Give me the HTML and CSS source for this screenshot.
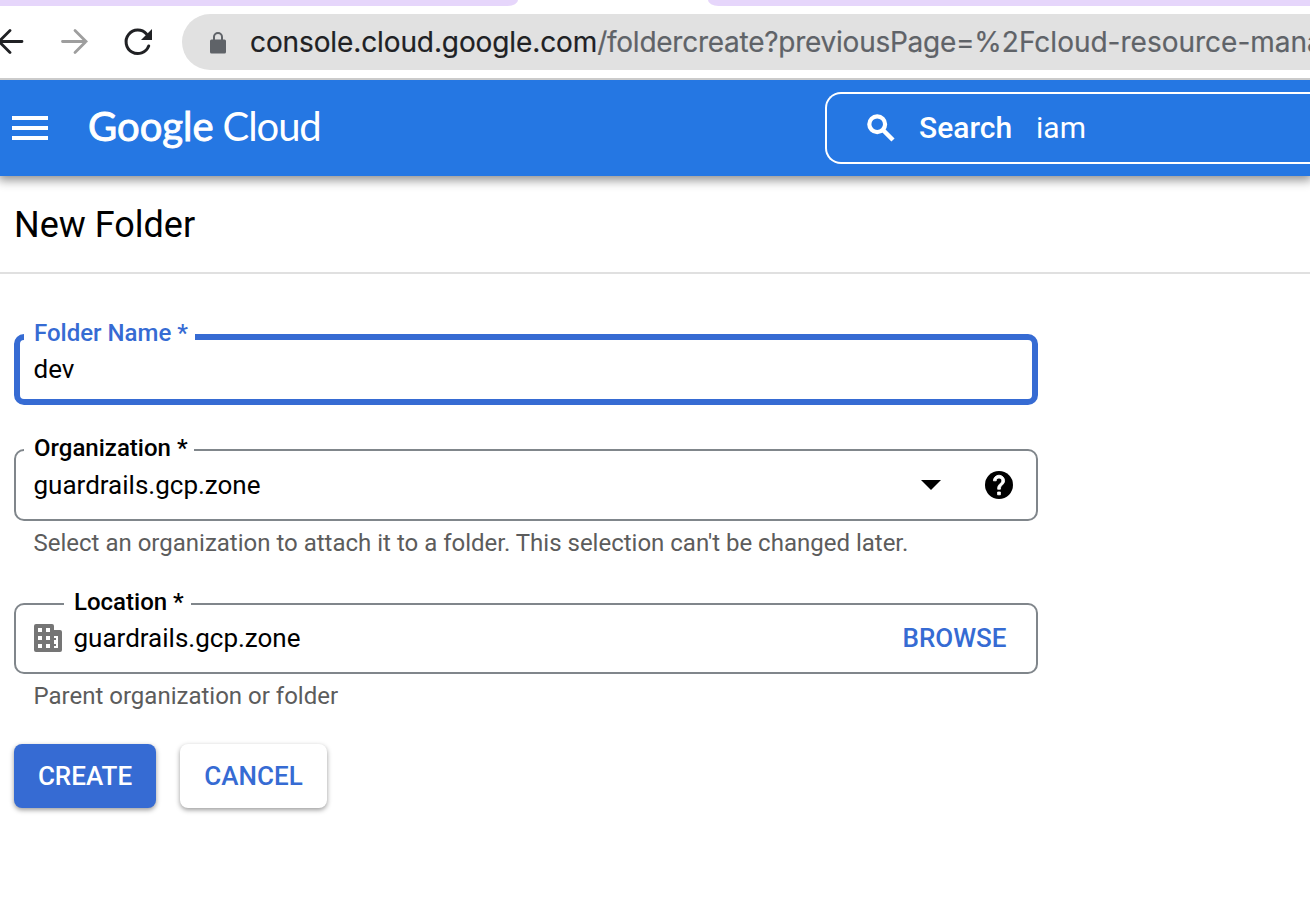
FILE: index.html
```html
<!DOCTYPE html>
<html lang="en">
<head>
<meta charset="utf-8">
<title>New Folder</title>
<link rel="stylesheet" href="styles.css">
</head>
<body>
<div class="tabstrip"><div class="tab tab-left"></div><div class="tab-active"></div><div class="tab tab-right"></div></div>
<div class="toolbar">
  <svg class="nav-icons" width="182" height="72" viewBox="0 6 182 72" fill="none" stroke-linecap="round">
    <path d="M22 41.500H-1M10 30.500L-1 41.500L10 52.500" stroke="#202124" stroke-width="2.800"/>
    <path d="M62.500 41.500H86M75 30.500L86 41.500L75 52.500" stroke="#9e9e9e" stroke-width="2.800"/>
    <path d="M148.700 46A11.700 11.700 0 1 1 146.500 34" stroke="#202124" stroke-width="3"/>
    <path d="M152 29V40H141Z" fill="#202124"/>
  </svg>
  <div class="omnibox">
    <svg class="lock" width="16" height="22" viewBox="0 0 16 22"><rect y="7.500" width="16" height="14" rx="1.500" fill="#5f6368"/><path d="M4 8V5a4 4 0 0 1 8 0V8" fill="none" stroke="#5f6368" stroke-width="2"/></svg>
    <div class="url"><span class="host">console.cloud.google.com</span><span class="path">/foldercreate?previousPage=</span><span class="parameter">%2Fcloud-resource-mana</span></div>
  </div>
</div>
<header class="header">
  <div class="menu"><i></i><i></i><i></i></div>
  <div class="logo"><span class="logo-google">Google</span><span class="logo-cloud">Cloud</span></div>
  <div class="search">
    <svg width="28" height="28" viewBox="0 0 28 28" fill="none" stroke="#fff"><circle cx="10.200" cy="10.200" r="7.900" stroke-width="4.200"/><path d="M16 16L26 26" stroke-width="4.500"/></svg>
    <span class="search-label">Search</span><span class="search-query">iam</span>
  </div>
</header>
<h1 class="title"><span>New Folder</span></h1>
<main class="form">
  <div class="field field-focused"><label class="label label-name">Folder Name *</label><span class="value">dev</span></div>
  <div class="field field-org"><label class="label label-org">Organization *</label><span class="value">guardrails.gcp.zone</span>
    <svg class="caret" width="20" height="10" viewBox="0 0 20 10"><path d="M0 0H20L10 10Z"/></svg>
    <svg class="help" width="28" height="28" viewBox="2 2 20 20"><circle cx="12" cy="12" r="10"/><path fill="#fff" stroke="#fff" stroke-width=".6" d="M13 19h-2v-2h2v2zm2.070-7.750l-.9.920C13.450 12.900 13 13.500 13 15h-2v-.5c0-1.100.450-2.100 1.170-2.830l1.240-1.260c.370-.360.590-.860.590-1.410 0-1.100-.9-2-2-2s-2 .9-2 2H8c0-2.210 1.790-4 4-4s4 1.790 4 4c0 .880-.360 1.680-.930 2.250z"/></svg>
  </div>
  <p class="hint hint-org">Select an organization to attach it to a folder. This selection can't be changed later.</p>
  <div class="field field-location"><label class="label label-location">Location *</label>
    <svg class="building" width="28" height="28" viewBox="0 0 28 28" fill-rule="evenodd" fill="#757575"><path d="M2 0H18a2 2 0 0 1 2 2V6H26a2 2 0 0 1 2 2V26a2 2 0 0 1-2 2H2a2 2 0 0 1-2-2V2A2 2 0 0 1 2 0ZM4 4V8H8V4ZM12 4V8H16V4ZM4 12V16H8V12ZM12 12V16H16V12ZM4 20V24H8V20ZM12 20V24H16V20ZM20 12V14H22V16H20V20H22V22H20V24H24V12Z"/></svg>
    <span class="value">guardrails.gcp.zone</span><span class="browse">BROWSE</span></div>
  <p class="hint hint-location">Parent organization or folder</p>
  <div class="actions"><button class="button primary">CREATE</button><button class="button secondary">CANCEL</button></div>
</main>
</body>
</html>
```
FILE: styles.css
```css
* { box-sizing: border-box; }
body { margin: 0; height: 916px; overflow: hidden; background: #fff; color: #000; font-family: Roboto, sans-serif; }
svg { flex: none; display: block; }
.tabstrip { display: flex; height: 6px; overflow: hidden; }
.tab { background: #e6d6fb; }
.tab-left { width: 518px; border-bottom-right-radius: 14px 8px; }
.tab-active { width: 190px; }
.tab-right { flex: 1; border-bottom-left-radius: 14px 8px; }
.toolbar { display: flex; align-items: center; height: 74px; border-bottom: 2px solid #cbcbcb; }
.omnibox { display: flex; align-items: center; flex: 1; min-width: 0; height: 56px; padding-left: 28px; background: #e1e1e1; border-radius: 28px 0 0 28px; overflow: hidden; }
.lock { margin: 2px 24px 0 0; }
.url { font: 28px/40px Inter, sans-serif; white-space: nowrap; color: #5f6368; -webkit-text-stroke: .2px; }
.host { color: #202124; letter-spacing: -.11px; }
.path { letter-spacing: -.25px; }
.header { position: relative; display: flex; align-items: center; height: 96px; padding-left: 12px; background: #2577e3; color: #fff; box-shadow: 0 2px 10px 2px rgba(0,0,0,.45); clip-path: inset(0 0 -24px 0); }
.menu { display: grid; gap: 6px; width: 36px; margin-right: 40px; }
.menu i { height: 4px; background: #fff; }
.logo { display: flex; gap: 9px; width: 737px; padding-bottom: 4px; font: 40px/48px Lato, sans-serif; }
.logo-google { -webkit-text-stroke: .9px #fff; }
.logo-cloud { letter-spacing: -1.1px; }
.search { display: flex; align-items: center; flex: 1; height: 72px; padding-left: 40px; border: 2px solid #fff; border-right: 0; border-radius: 16px 0 0 16px; font-size: 30px; }
.search-label { margin-left: 24px; padding-bottom: 2px; font-weight: 500; }
.search-query { margin-left: 24px; padding-bottom: 2px; }
.title { display: flex; align-items: center; height: 98px; margin: 0; padding: 1px 0 0 14px; border-bottom: 2px solid #e0e0e0; font-size: 36px; font-weight: 400; }
.form { width: 1038px; padding: 60px 0 0 14px; }
.field { position: relative; display: flex; align-items: center; height: 72px; padding-left: 18px; border: 2px solid #80868b; border-radius: 10px; }
.field-focused { height: 71px; padding-left: 14px; border: 6px solid #366bd3; margin-bottom: 44px; }
.value { margin-left: -.5px; font-size: 26px; line-height: 32px; }
.field-focused .value { padding-bottom: 2px; }
.label { position: absolute; top: -17px; left: 8px; padding-left: 10px; background: #fff; font-size: 24px; font-weight: 500; line-height: 28px; white-space: nowrap; }
.label-name { top: -21px; left: 4px; width: 171px; color: #366bd3; }
.label-org { width: 170px; }
.label-location { left: 48px; width: 127px; }
.caret { margin-left: auto; }
.help { margin: 0 23px 0 44px; }
.hint { margin: 0 0 0 19.5px; color: #5c5c5c; font-size: 24px; line-height: 28px; white-space: nowrap; }
.hint-org { padding-top: 8px; height: 82px; }
.field-location { height: 71px; padding-bottom: 1px; }
.building { margin-right: 12px; }
.browse { margin: 0 29.5px 0 auto; color: #366bd3; font-size: 26px; font-weight: 500; }
.hint-location { padding-top: 8px; height: 70px; }
.actions { display: flex; gap: 24px; }
.button { height: 64px; padding: 0; border: 0; border-radius: 8px; font: 500 26px Roboto, sans-serif; box-shadow: 0 2px 5px rgba(0,0,0,.4); }
.primary { width: 142px; background: #366bd3; color: #fff; }
.secondary { width: 147px; background: #fff; color: #366bd3; }
```
